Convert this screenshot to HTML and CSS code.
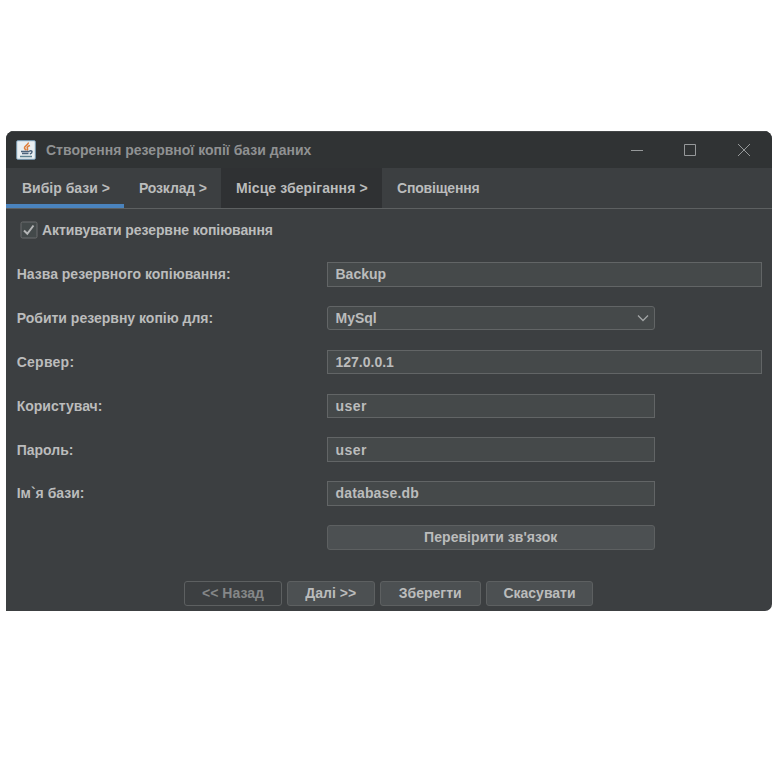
FILE: index.html
```html
<!DOCTYPE html>
<html lang="uk">
<head>
<meta charset="utf-8">
<title>Створення резервної копії бази даних</title>
<link rel="stylesheet" href="styles.css">
</head>
<body>
<main class="window">
  <header class="titlebar">
    <svg class="app-icon" width="20" height="20" viewBox="0 0 20 20">
      <rect x=".7" y=".7" width="18.6" height="18.6" rx="1" fill="#e9eff2" stroke="#7b9fb8" stroke-width="1"/>
      <path d="M12.300 2.500c.8 2.500-4.800 3.400-3.800 5.800.3.800 1.300 1.300 1.500 2M14 5.500c-2.500.8-3.300 1.900-2.500 3.100.4.800 0 1.300-.5 1.800" fill="none" stroke="#df803d" stroke-width="1.600"/>
      <path d="M5 11.500h8.500M6 13.500h6.500M13.500 11c3.300-.8 3.300 2.200.3 2.900" fill="none" stroke="#4d647c" stroke-width="1.500"/>
      <path d="M4 16.500h12" stroke="#5c8190" stroke-width="1.300"/>
    </svg>
    <h1 class="title">Створення резервної копії бази даних</h1>
    <svg class="controls" width="122" height="16" viewBox="0 0 122 16" fill="none" stroke="#96999a">
      <path d="M1 8.500h12"/>
      <path d="M54.500 2.500h11v11h-11z"/>
      <path d="M108 2l12 12M120 2l-12 12"/>
    </svg>
  </header>
  <nav class="tabs">
    <span class="tab tab-base active">Вибір бази &gt;</span>
    <span class="tab tab-schedule">Розклад &gt;</span>
    <span class="tab tab-storage hover">Місце зберігання &gt;</span>
    <span class="tab tab-notice">Сповіщення</span>
  </nav>
  <section class="form">
    <label class="activate">
      <svg width="18" height="18" viewBox="0 0 18 18" fill="none">
        <rect x="1" y="1" width="16" height="16" rx="1.500" fill="#43494a" stroke="#6b6d6e"/>
        <path d="M4 9.500l3.300 3.300 6.200-8.300" stroke="#b4b5b6" stroke-width="2"/>
      </svg>
      <span>Активувати резервне копіювання</span>
    </label>
    <div class="rows">
      <span class="label">Назва резервного копіювання:</span><div class="field">Backup</div>
      <span class="label">Робити резервну копію для:</span>
      <div class="field short select">MySql
        <svg width="14" height="8" viewBox="0 0 14 8" fill="none"><path d="M2 1.500l5 5 5-5" stroke="#a2a5a6" stroke-width="1.300"/></svg>
      </div>
      <span class="label server">Сервер:</span><div class="field ip">127.0.0.1</div>
      <span class="label">Користувач:</span><div class="field short user">user</div>
      <span class="label">Пароль:</span><div class="field short user">user</div>
      <span class="label">Ім`я бази:</span><div class="field short database">database.db</div>
      <button class="button test">Перевірити зв'язок</button>
    </div>
  </section>
  <footer class="actions">
    <button class="button back" disabled>&lt;&lt; Назад</button>
    <button class="button next">Далі &gt;&gt;</button>
    <button class="button save">Зберегти</button>
    <button class="button cancel">Скасувати</button>
  </footer>
</main>
</body>
</html>
```
FILE: styles.css
```css
* { box-sizing: border-box; }
body {
  margin: 0;
  padding: 131px 8px 0 6px;
  background: #fff;
  color: #bbbcbc;
  font: bold 14px/18px "Liberation Sans", Arial, sans-serif;
}
.window {
  display: flex;
  flex-direction: column;
  height: 480px;
  background: #3c3f41;
  border-radius: 8px 8px 7px 0;
  overflow: hidden;
}
.titlebar {
  display: flex;
  align-items: center;
  height: 37px;
  padding: 0 20px 0 10px;
  background: #303334;
  color: #8f9192;
  border-top: 1px solid #434647;
}
.title { margin: 0 0 0 10px; font: inherit; }
.controls { margin: -1px 0 0 auto; }
.tabs {
  display: flex;
  height: 41px;
  border-bottom: 1px solid #5d6061;
}
.tab { height: 40px; padding: 11px 0 0 15px; white-space: nowrap; }
.tab-base { width: 118px; padding-left: 16px; }
.tab-schedule { width: 97px; letter-spacing: -.15px; }
.tab-storage { width: 161px; letter-spacing: .1px; }
.tab-notice { letter-spacing: -.18px; }
.active { border-bottom: 4px solid #4a83bd; }
.hover { background: #2f3133; }
.form { padding: 12px 10px 0; }
.activate {
  display: flex;
  align-items: center;
  gap: 4px;
  height: 18px;
  margin-left: 4px;
  letter-spacing: -.08px;
}
.rows {
  display: grid;
  grid-template-columns: 310px 1fr;
  grid-auto-rows: 24.500px;
  row-gap: 19.350px;
  margin: 23px 0 0 .5px;
  align-items: center;
}
.label { padding-left: .2px; white-space: nowrap; }
.server { letter-spacing: .25px; }
.field {
  display: flex;
  align-items: center;
  justify-content: space-between;
  height: 100%;
  padding: 0 8px;
  background: #45494a;
  border: 1px solid #626566;
}
.short { width: 328.500px; }
.select { padding-right: 4px; border-radius: 3px; }
.user { letter-spacing: .45px; }
.database { letter-spacing: .15px; }
.button {
  height: 25px;
  padding: 0 0 1px;
  background: #4c5052;
  border: 1px solid #5d6061;
  border-radius: 3px;
  color: inherit;
  font: inherit;
}
.test { grid-column: 2; width: 328.500px; letter-spacing: .05px; }
.actions { display: flex; gap: 5px; margin: auto 0 5px 178px; }
.back { width: 98px; background: #3c3f41; color: #858788; }
.next { width: 87.500px; }
.save { width: 101.500px; }
.cancel { width: 107px; }
```
